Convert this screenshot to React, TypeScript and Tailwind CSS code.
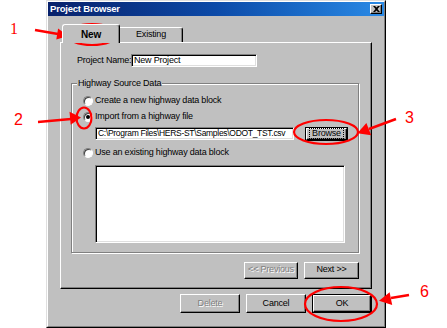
const GRAY = 'bg-[#c0c0c0]';

// classic 3D bevels
const raised =
  'border border-t-white border-l-white border-b-black border-r-black shadow-[inset_-1px_-1px_0_#808080]';
const sunken =
  'border border-t-[#808080] border-l-[#808080] border-b-white border-r-white shadow-[inset_1px_1px_0_#000,inset_-1px_-1px_0_#dfdfdf]';
const disabledText = 'text-[#808080] [text-shadow:1px_1px_0_#fff]';

function Button({
  label,
  width,
  height,
  disabled,
  focused,
  isDefault,
}: {
  label: string;
  width: string;
  height: string;
  disabled?: boolean;
  focused?: boolean;
  isDefault?: boolean;
}) {
  const outer = focused || isDefault;
  return (
    <div className={`${width} ${height} ${outer ? 'border border-black' : ''} flex`}>
      <div className={`flex-1 ${raised} ${GRAY} flex items-center justify-center`}>
        <span
          className={`whitespace-nowrap ${disabled ? disabledText : 'text-black'} ${
            focused ? 'outline-1 outline-dotted outline-black px-[2px] leading-[9px]' : ''
          }`}
        >
          {label}
        </span>
      </div>
    </div>
  );
}

function Radio({ checked, label }: { checked?: boolean; label: string }) {
  return (
    <div className="flex items-center gap-[2px] h-[10px]">
      <div className="w-[10px] h-[10px] rounded-full bg-white border border-t-[#808080] border-l-[#808080] border-b-white border-r-white shadow-[inset_1px_1px_0_#404040] flex items-center justify-center">
        {checked && <div className="w-[4px] h-[4px] rounded-full bg-black" />}
      </div>
      <span className="whitespace-nowrap">{label}</span>
    </div>
  );
}

function Annotations() {
  return (
    <>
      <svg className="absolute inset-0 pointer-events-none" width={447} height={328}>
        <g fill="none" stroke="#ff0000" strokeWidth={2.2}>
          <ellipse cx={92} cy={34.5} rx={25} ry={10.5} />
          <ellipse cx={84} cy={118} rx={7.5} ry={10.5} />
          <ellipse cx={326} cy={132} rx={32} ry={12} />
          <ellipse cx={341} cy={304} rx={36} ry={17} />
          <line x1={35} y1={30} x2={58} y2={34} strokeWidth={2.5} />
          <line x1={38} y1={122} x2={71} y2={119} strokeWidth={2.5} />
          <line x1={396} y1={119} x2={369} y2={129} strokeWidth={2.5} />
          <line x1={409} y1={295} x2={391} y2={298} strokeWidth={2.5} />
        </g>
        <g fill="#ff0000">
          <polygon points="68,36 56.3,39.5 58.1,28.5" />
          <polygon points="81,117.5 70.7,124.7 69.5,111.7" />
          <polygon points="357.3,133.3 371.2,135.2 366.4,123" />
          <polygon points="379,300.7 392.2,305 389.6,292.2" />
        </g>
      </svg>
      <span className="absolute left-[10px] top-[21px] text-[#ff0000] text-[16px] leading-none font-['Liberation_Serif',serif]">1</span>
      <span className="absolute left-[14px] top-[112px] text-[#ff0000] text-[16px] leading-none">2</span>
      <span className="absolute left-[405px] top-[110px] text-[#ff0000] text-[16px] leading-none">3</span>
      <span className="absolute left-[420px] top-[284px] text-[#ff0000] text-[16px] leading-none">6</span>
    </>
  );
}

export default function App() {
  return (
    <div className="relative w-[447px] h-[328px] bg-white overflow-hidden font-['Liberation_Sans',Arial,sans-serif] text-[9px] tracking-[-0.2px] text-black">
      {/* Window */}
      <div className="ml-[46px] w-[340px] h-[328px] border border-t-[#dfdfdf] border-l-[#dfdfdf] border-b-black border-r-black">
        <div className={`h-full border border-t-white border-l-white border-b-[#808080] border-r-[#808080] ${GRAY} flex flex-col`}>
          {/* Title bar */}
          <div className="h-[14px] flex items-center justify-between pl-[2px] pr-[2px] bg-gradient-to-r from-[#08216b] via-[#0c4aa8] to-[#2a8ae6]">
            <span className="text-white font-bold text-[9.5px] leading-none">Project Browser</span>
            <div className={`w-[12px] h-[10px] ${raised} ${GRAY} flex items-center justify-center`}>
              <svg width="7" height="6" viewBox="0 0 7 6">
                <path d="M0 0h2l1.5 1.5L5 0h2L4.5 3L7 6H5L3.5 4.5L2 6H0l2.5-3z" fill="#000" />
              </svg>
            </div>
          </div>

          {/* Body */}
          <div className="px-[12px] pt-[8px] flex flex-col">
            {/* Tabs */}
            <div className="flex items-end pl-[2px] h-[18px]">
              <div className="relative z-10 -mb-[1px] w-[58px] h-[19px] bg-[#c0c0c0] border-t border-l border-t-white border-l-white border-r border-r-black shadow-[inset_-1px_0_0_#808080] rounded-t-[3px] flex items-center justify-center">
                <span className="font-bold text-[10px]">New</span>
              </div>
              <div className="w-[63px] h-[15px] border-t border-t-white border-r border-r-black shadow-[inset_-1px_0_0_#808080] rounded-tr-[3px] flex items-center justify-center">
                <span>Existing</span>
              </div>
            </div>

            {/* Tab panel */}
            <div className="w-[312px] h-[247px] border border-t-white border-l-white border-b-black border-r-black shadow-[inset_-1px_-1px_0_#808080] flex flex-col">
              <div className="mt-[11px] flex items-center pl-[16px]">
                <span className="w-[54px] whitespace-nowrap">Project Name:</span>
                <div className={`w-[126px] h-[13px] bg-white ${sunken} flex items-center pl-[2px] whitespace-nowrap`}>
                  New Project
                </div>
              </div>

              {/* Group box */}
              <div className="relative mt-[15px] ml-[10px] w-[288px] h-[170px] border border-[#808080] shadow-[inset_1px_1px_0_#fff,1px_1px_0_#fff] flex flex-col pl-[11px] pt-[12px]">
                <span className="absolute -top-[6px] left-[5px] bg-[#c0c0c0] px-[1px] leading-[10px] whitespace-nowrap">
                  Highway Source Data
                </span>
                <Radio label="Create a new highway data block" />
                <div className="mt-[6px]">
                  <Radio checked label="Import from a highway file" />
                </div>
                <div className="mt-[5px] pl-[12px] flex items-start">
                  <div className={`w-[199px] h-[13px] bg-white ${sunken} flex items-center pl-[2px] whitespace-nowrap overflow-hidden text-[8.5px] tracking-[-0.3px]`}>
                    C:\Program Files\HERS-ST\Samples\ODOT_TST.csv
                  </div>
                  <div className="ml-[11px]">
                    <Button label="Browse" width="w-[43px]" height="h-[14px]" focused />
                  </div>
                </div>
                <div className="mt-[7px]">
                  <Radio label="Use an existing highway data block" />
                </div>
                <div className={`mt-[7px] ml-[12px] w-[250px] h-[78px] bg-white ${sunken}`} />
              </div>

              {/* Wizard buttons */}
              <div className="mt-[9px] ml-[10px] w-[288px] flex justify-end gap-[6px]">
                <Button label="<< Previous" width="w-[54px]" height="h-[17px]" disabled />
                <Button label="Next >>" width="w-[55px]" height="h-[17px]" />
              </div>
            </div>

            {/* Dialog buttons */}
            <div className="mt-[5px] flex justify-end gap-[6px]">
              <Button label="Delete" width="w-[60px]" height="h-[19px]" disabled />
              <Button label="Cancel" width="w-[60px]" height="h-[19px]" />
              <Button label="OK" width="w-[60px]" height="h-[19px]" isDefault />
            </div>
          </div>
        </div>
      </div>

      <Annotations />
    </div>
  );
}
